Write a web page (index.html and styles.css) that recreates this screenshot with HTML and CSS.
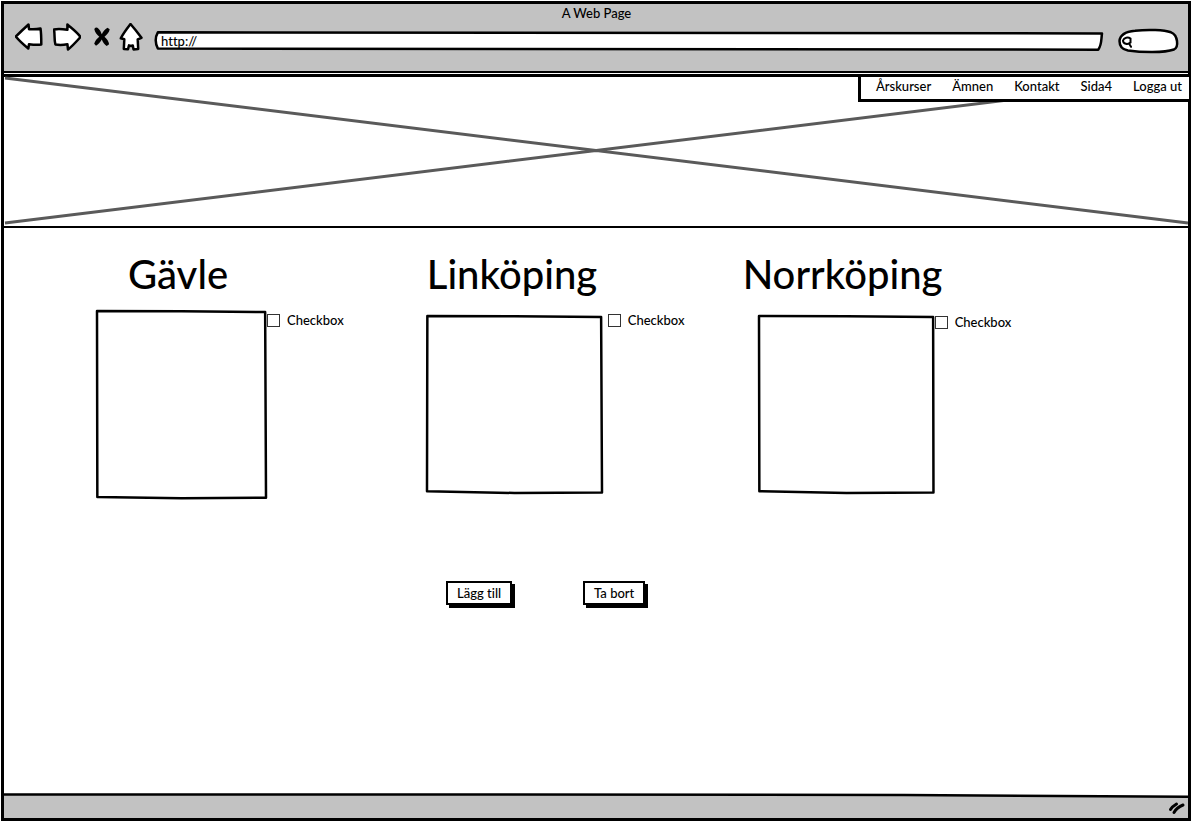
FILE: index.html
```html
<!DOCTYPE html>
<html lang="sv">
<head>
<meta charset="utf-8">
<title>A Web Page</title>
<meta name="viewport" content="width=device-width, initial-scale=1">
<link rel="stylesheet" href="styles.css">
</head>
<body>
<div class="window">
  <header class="chrome">
    <div class="chrome-title">A Web Page</div>
    <div class="toolbar">
      <button class="tool" type="button" aria-label="Back">
        <svg width="28" height="28" viewBox="0 0 28 28"><path class="ink" d="M.8 13.500 7 7.500 13.500 1.500 14 6.200c4 .3 8 .2 11.500-.7.8 5 .8 11 .8 16-4 .5-8 .2-12.300-.3L13.300 25.500C9 22 4.500 18 .8 13.500z"/></svg>
      </button>
      <button class="tool tool-forward" type="button" aria-label="Forward">
        <svg width="28" height="28" viewBox="0 0 28 28"><path class="ink" d="M1 6.500C5 5.500 9.500 6 14.400 6.700V1.500C19 5.500 24 9 27.500 14 23.500 18.500 19.500 23 15 26.500l-.6-5.300c-4 .8-8 1-12 .3C1 17 2 11 1 6.500z"/></svg>
      </button>
      <button class="tool tool-stop" type="button" aria-label="Stop">
        <svg width="16" height="20" viewBox="0 0 16 20"><path d="M.3 2C1.500.3 3 .2 4.300 1.500 6 3 7 5 7.800 7.300 9 4.500 11 2.300 13.500.7l2.200 1.600c-.5 3-2.500 5.300-5.200 7.400 2.500 2.300 4.300 4.700 4.600 7.600L12.700 18.900C10.500 17.500 8.800 15.300 7.800 12.500 6.500 15 4.500 17.300 2 18.700L.2 16.700C1 13.700 3 11.500 5.300 9.700 2.700 7.500.8 5 .3 2z"/></svg>
      </button>
      <button class="tool tool-home" type="button" aria-label="Home">
        <svg width="24" height="28" viewBox="0 0 24 28"><path class="ink" d="M11.500 1 16.500 7 22.500 14.800 18.700 16.300l.5 9.700-4.700.4-.7-4-1.800.6-2-.6-1 3.800-4.200-.2L5.300 16.300l-3.500-1C4.500 10 8 5.500 11.500 1z"/></svg>
      </button>
      <div class="address">
        <svg class="sketch" viewBox="0 0 100 100" preserveAspectRatio="none"><path class="ink" d="M.3 2 100 8C99.900 40 100 70 99.600 98L.3 92C0 60 0 30 .3 2z"/></svg>
        <input type="text" value="http://" aria-label="Address">
      </div>
      <div class="search">
        <svg class="sketch" viewBox="0 0 60 24" preserveAspectRatio="none"><path class="ink" d="M1.500 12C2 6 8 2.500 17 1.700 30 .2 46 .8 53 3.300 60 6 61 18 56 20.500 46 24 24 23.500 10 21.500 4 20.500 1.500 17 1.500 12z"/></svg>
        <svg class="lens" width="12" height="12" viewBox="0 0 12 12"><path d="M9.500 2.500C7 .8 3 1.500 2 4.500 2 8 7 9 9.500 6.500zM8 7.500l2 3.300"/></svg>
        <input type="search" aria-label="Search">
      </div>
    </div>
  </header>

  <div class="banner">
    <svg class="sketch" viewBox="0 0 1185 149" preserveAspectRatio="none">
      <path class="cross" d="M1 1 1184 146M1 146 1184 1"/>
    </svg>
    <nav class="menu">
      <a href="#arskurser">Årskurser</a>
      <a href="#amnen">Ämnen</a>
      <a href="#kontakt">Kontakt</a>
      <a href="#sida4">Sida4</a>
      <a href="#logga-ut">Logga ut</a>
    </nav>
  </div>

  <main class="content">
    <div class="cities">
      <section class="city city-gavle">
        <h2>Gävle</h2>
        <div class="city-row">
          <div class="frame frame-tall"><svg class="sketch" viewBox="0 0 100 100" preserveAspectRatio="none"><path class="line" d="M0 0 50 .2 99.500.6 100 99.800 50 100.200.2 99.400z"/></svg></div>
          <label class="check"><input type="checkbox">Checkbox</label>
        </div>
      </section>
      <section class="city city-linkoping">
        <h2>Linköping</h2>
        <div class="city-row">
          <div class="frame"><svg class="sketch" viewBox="0 0 100 100" preserveAspectRatio="none"><path class="line" d="M.2 0 50 .2 99.500.6 100 99.700 50 100 0 99z"/></svg></div>
          <label class="check"><input type="checkbox">Checkbox</label>
        </div>
      </section>
      <section class="city city-norrkoping">
        <h2>Norrköping</h2>
        <div class="city-row">
          <div class="frame"><svg class="sketch" viewBox="0 0 100 100" preserveAspectRatio="none"><path class="line" d="M0 0 50 .2 99.500.6 99.700 99.700 50 100 .2 99z"/></svg></div>
          <label class="check"><input type="checkbox">Checkbox</label>
        </div>
      </section>
    </div>
    <div class="actions">
      <button class="action" type="button">Lägg till</button>
      <button class="action" type="button">Ta bort</button>
    </div>
  </main>

  <footer class="status">
    <svg class="status-edge" viewBox="0 0 1184 26" preserveAspectRatio="none"><path class="fill" d="M0 1.500 500 1.500 900 2 1184 4V26H0z"/><path class="line" d="M0 1.500 500 1.500 900 2 1184 4"/></svg>
    <svg class="grip" width="18" height="14" viewBox="0 0 18 14"><path d="M2.500 8.500C4 6 6 4.500 8.500 3M6 11.500C8 8 11 5.500 15 4"/></svg>
  </footer>
</div>
</body>
</html>
```

FILE: styles.css
```css
* {
  box-sizing: border-box;
}

body {
  margin: 0;
  background: #fff;
  color: #000;
  font-family: Lato, "Open Sans", sans-serif;
  font-size: 13px;
  font-weight: 500;
  font-variant-ligatures: none;
  line-height: 16px;
}

button,
input {
  font: inherit;
  font-variant-ligatures: none;
  color: inherit;
}

.window {
  display: flex;
  flex-direction: column;
  min-height: calc(100vh - 2px);
  margin: 1px;
  border: 3px solid #000;
}

.sketch {
  position: absolute;
  inset: 0;
  width: 100%;
  height: 100%;
  overflow: visible;
}

.ink,
.line {
  fill: #fff;
  stroke: #000;
  stroke-width: 2.5px;
  stroke-linejoin: round;
  vector-effect: non-scaling-stroke;
}

.line {
  fill: none;
}

.fill {
  fill: #c2c2c2;
}

/* Browser chrome */

.chrome {
  height: 69px;
  padding: 1px 10px 0 11px;
  background: #c2c2c2;
  border-bottom: 2px solid #000;
}

.chrome-title {
  text-align: center;
}

.toolbar {
  display: flex;
  align-items: center;
  height: 32px;
}

.tool {
  display: flex;
  padding: 0;
  border: 0;
  background: none;
}

.tool-forward {
  margin-left: 10px;
}

.tool-stop {
  margin-left: 13px;
}

.tool-home {
  margin-left: 9px;
}

.address {
  position: relative;
  flex: 1;
  height: 18px;
  margin: 8px 16px 0 12px;
}

.search {
  position: relative;
  width: 60px;
  height: 24px;
  margin-top: 8px;
}

.address input,
.search input {
  position: relative;
  display: block;
  width: 100%;
  height: 100%;
  padding: 0 6px;
  border: 0;
  outline: 0;
  background: none;
}

.lens {
  position: absolute;
  left: 3px;
  top: 7px;
}

.lens path,
.grip path {
  fill: none;
  stroke: #000;
  stroke-width: 2;
  stroke-linecap: round;
}

/* Banner with placeholder image */

.banner {
  position: relative;
  height: 154px;
  margin: 1px -3px 0 -2px;
  border: 2px solid #000;
  border-top-width: 3px;
}

.cross {
  fill: none;
  stroke: #5a5a5a;
  stroke-width: 3px;
  vector-effect: non-scaling-stroke;
}

.menu {
  position: absolute;
  top: -3px;
  right: -2px;
  display: flex;
  gap: 21px;
  padding: 1px 7px 5px 15px;
  border: 2px solid #000;
  border-width: 3px 2px 3px 3px;
  background: #fff;
}

.menu a {
  color: inherit;
  text-decoration: none;
}

/* Cities */

.content {
  flex: 1;
  padding-top: 22px;
}

.cities {
  display: grid;
  grid-template-columns: 331fr 317fr 447fr;
  padding-left: 93px;
}

.city h2 {
  margin: 0;
  font-size: 40px;
  font-weight: 500;
  line-height: 48px;
}

.city-gavle h2 {
  padding-left: 31px;
}

.city-row {
  display: flex;
  align-items: flex-start;
  padding-top: 13px;
}

.city-norrkoping .city-row {
  padding-left: 16px;
}

.frame {
  position: relative;
  width: 175px;
  height: 177px;
  margin-top: 5px;
}

.frame-tall {
  width: 169px;
  height: 187px;
  margin-top: 0;
}

.check {
  display: flex;
  align-items: center;
  gap: 7px;
  margin-top: 1px;
  margin-left: 1px;
}

.city-linkoping .check {
  margin-left: 6px;
}

.city-norrkoping .check {
  margin-top: 3px;
}

.check input {
  appearance: none;
  width: 13px;
  height: 13px;
  margin: 0;
  border: 1px solid #333;
  background: #fff;
}

.check input:checked {
  background: #333;
}

/* Buttons */

.actions {
  display: flex;
  gap: 71px;
  padding: 83px 0 32px 442px;
}

.action {
  padding: 2px 9px;
  border: 2px solid #000;
  background: #fff;
  box-shadow: 3px 3px 0 #000;
}

/* Status bar */

.status {
  position: relative;
  display: flex;
  justify-content: flex-end;
  height: 25px;
  padding: 8px 2px 0;
}

.status-edge {
  position: absolute;
  inset: 0;
  width: 100%;
  height: 100%;
}

.grip {
  position: relative;
}

.grip path {
  stroke-width: 3;
}
```
